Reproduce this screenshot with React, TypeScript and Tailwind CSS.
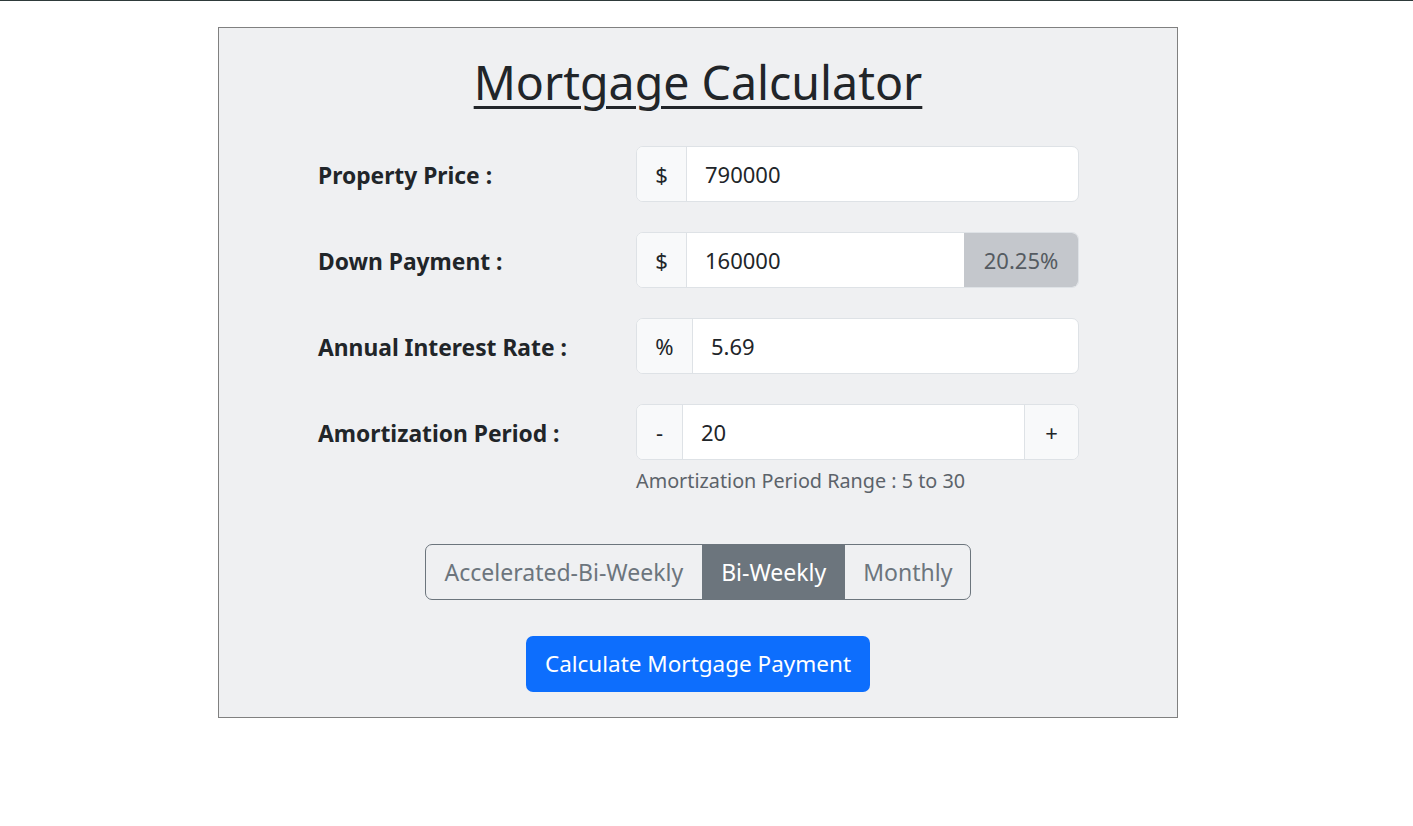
import React from "react";

const font = { fontFamily: '"Noto Sans", "Open Sans", sans-serif' };

function Prefix({ children, w }: { children: React.ReactNode; w: string }) {
  return (
    <div className={`${w} flex items-center justify-center bg-[#f8f9fa] border-r border-[#dee2e6] text-[#212529]`}>
      {children}
    </div>
  );
}

export default function App() {
  return (
    <div className="min-h-screen bg-white border-t border-[#2e3a3a]" style={font}>
      <div className="w-[960px] ml-[218px] mt-[26px] border border-[#808080] bg-[#eff0f2] pt-[24px] pb-[25px] text-[#212529]">
        <h1 className="text-center text-[46.5px] leading-[60px] underline decoration-[3px] underline-offset-[6px]">
          Mortgage Calculator
        </h1>

        <div className="mt-[34px] ml-[99px] grid grid-cols-[318px_443px] gap-y-[30px] text-[22px]">
          <div className="flex items-center h-[56px] pt-[5px] font-bold text-[22.8px]">Property Price :</div>
          <div className="flex h-[56px] rounded-[7px] border border-[#dee2e6] overflow-hidden bg-white">
            <Prefix w="w-[50px]">$</Prefix>
            <div className="flex-1 flex items-center pl-[18px]">790000</div>
          </div>

          <div className="flex items-center h-[56px] pt-[5px] font-bold text-[22.8px]">Down Payment :</div>
          <div className="flex h-[56px] rounded-[7px] border border-[#dee2e6] overflow-hidden bg-white">
            <Prefix w="w-[50px]">$</Prefix>
            <div className="flex-1 flex items-center pl-[18px]">160000</div>
            <div className="w-[114px] flex items-center justify-center bg-[#c4c7cc] text-[#555b61]">20.25%</div>
          </div>

          <div className="flex items-center h-[56px] pt-[5px] font-bold text-[22.8px]">Annual Interest Rate :</div>
          <div className="flex h-[56px] rounded-[7px] border border-[#dee2e6] overflow-hidden bg-white">
            <Prefix w="w-[56px]">%</Prefix>
            <div className="flex-1 flex items-center pl-[18px]">5.69</div>
          </div>

          <div className="flex items-center h-[56px] pt-[5px] font-bold text-[22.8px] self-start">Amortization Period :</div>
          <div>
            <div className="flex h-[56px] rounded-[7px] border border-[#dee2e6] overflow-hidden bg-white">
              <Prefix w="w-[46px]">-</Prefix>
              <div className="flex-1 flex items-center pl-[18px]">20</div>
              <div className="w-[54px] flex items-center justify-center bg-[#f8f9fa] border-l border-[#dee2e6]">+</div>
            </div>
            <div className="mt-[6px] text-[19.8px] leading-[30px] text-[#5c636a]">
              Amortization Period Range : 5 to 30
            </div>
          </div>
        </div>

        <div className="mt-[48px] flex justify-center">
          <div className="flex h-[56px] rounded-[7px] border border-[#6c757d] overflow-hidden text-[23px] text-[#6c757d]">
            <div className="flex items-center px-[19px]">Accelerated-Bi-Weekly</div>
            <div className="flex items-center px-[19px] bg-[#6c757d] text-white">Bi-Weekly</div>
            <div className="flex items-center px-[18px]">Monthly</div>
          </div>
        </div>

        <div className="mt-[36px] flex justify-center">
          <div className="h-[56px] flex items-center px-[19px] rounded-[7px] bg-[#0d6efd] text-white text-[22.5px]">
            Calculate Mortgage Payment
          </div>
        </div>
      </div>
    </div>
  );
}
